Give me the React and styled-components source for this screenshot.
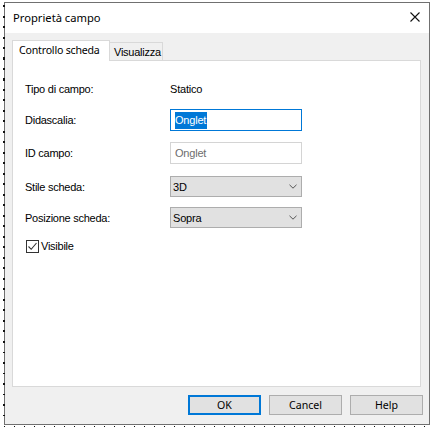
import React from "react";
import styled, { createGlobalStyle } from "styled-components";

const Global = createGlobalStyle`
  html, body { margin: 0; padding: 0; background: #ffffff; }
  body { width: 432px; height: 428px; overflow: hidden; }
`;

const uiFont = `"Segoe UI", "Noto Sans", "Liberation Sans", sans-serif`;
const oldFont = `"Tahoma", "Liberation Sans", sans-serif`;

const Page = styled.div`
  width: 432px;
  height: 428px;
  padding: 2px 0 0 4px;
  box-sizing: border-box;
  display: flex;
  flex-direction: column;
`;

const Window = styled.div`
  position: relative;
  width: 426px;
  height: 423px;
  box-sizing: border-box;
  border: 1px solid #707070;
  display: flex;
  flex-direction: column;
  background: #f0f0f0;
  &::before {
    content: "";
    position: absolute;
    left: -2px;
    top: 0;
    width: 2px;
    height: 100%;
    background: repeating-linear-gradient(
      to bottom,
      transparent 0px,
      transparent 2px,
      #111 2px,
      #111 4px,
      transparent 4px,
      transparent 10.5px
    );
  }
`;

const Ticks = styled.div`
  margin-top: 1px;
  width: 426px;
  height: 1px;
  background: repeating-linear-gradient(
    to right,
    #111 0px,
    #111 1px,
    transparent 1px,
    transparent 10px
  );
`;

const TitleBar = styled.div`
  height: 30px;
  background: #ffffff;
  display: flex;
  align-items: center;
  justify-content: space-between;
  padding: 0 9px 0 8px;
  flex-shrink: 0;
`;

const Title = styled.span`
  font-family: ${uiFont};
  font-size: 11.2px;
  color: #000;
  padding-bottom: 1px;
  white-space: nowrap;
`;

const CloseIcon = styled.svg`
  width: 10px;
  height: 10px;
  margin-bottom: 2px;
`;

const Body = styled.div`
  flex: 1;
  display: flex;
  flex-direction: column;
  padding: 7px 0 0 0;
`;

const TabStrip = styled.div`
  display: flex;
  align-items: flex-end;
  padding-left: 7px;
  height: 21px;
  margin-bottom: -1px;
  position: relative;
  z-index: 1;
`;

const Tab = styled.div`
  box-sizing: border-box;
  border: 1px solid #d9d9d9;
  border-bottom: none;
  background: ${(p) => (p.$active ? "#ffffff" : "#f0f0f0")};
  height: ${(p) => (p.$active ? "21px" : "18px")};
  margin-bottom: ${(p) => (p.$active ? "0" : "1px")};
  width: ${(p) => p.$w}px;
  padding-left: ${(p) => (p.$active ? "6px" : "4px")};
  display: flex;
  align-items: center;
  white-space: nowrap;
  font-family: ${(p) => (p.$active ? uiFont : oldFont)};
  font-size: ${(p) => (p.$active ? "10.6px" : "11px")};
  letter-spacing: ${(p) => (p.$active ? "-0.2px" : "-0.25px")};
  color: #000;
  ${(p) => (p.$active ? "padding-bottom: 2px;" : "padding-top: 1px;")}
  ${(p) => (p.$active ? "" : "margin-left: -1px;")}
`;

const Panel = styled.div`
  box-sizing: border-box;
  margin: 0 8px 0 7px;
  height: 327px;
  background: #ffffff;
  border: 1px solid #d9d9d9;
  padding: 17px 0 0 12px;
  display: flex;
  flex-direction: column;
`;

const Row = styled.div`
  display: flex;
  align-items: center;
  height: ${(p) => p.$h || 22}px;
  margin-top: ${(p) => p.$mt || 0}px;
`;

const Label = styled.span`
  width: 145px;
  font-family: ${oldFont};
  font-size: 11px;
  letter-spacing: -0.25px;
  color: #000;
  flex-shrink: 0;
  white-space: nowrap;
`;

const Value = styled.span`
  font-family: ${oldFont};
  font-size: 11px;
  letter-spacing: -0.2px;
  color: #000;
`;

const TextBox = styled.div`
  box-sizing: border-box;
  width: 132px;
  height: 22px;
  border: 1px solid ${(p) => (p.$focused ? "#0078d7" : "#d4d4d4")};
  background: #fff;
  display: flex;
  align-items: center;
  padding-left: 4px;
  font-family: ${oldFont};
  font-size: 11px;
  letter-spacing: -0.2px;
  color: ${(p) => (p.$disabled ? "#6d6d6d" : "#000")};
`;

const Selected = styled.span`
  background: #0078d7;
  color: #fff;
  padding: 2px 1px 3px 0;
  line-height: 12px;
`;

const Select = styled.div`
  box-sizing: border-box;
  width: 132px;
  height: 21px;
  border: 1px solid #adadad;
  background: #e1e1e1;
  display: flex;
  align-items: center;
  justify-content: space-between;
  padding: 0 4px 0 2px;
  font-family: ${oldFont};
  font-size: 11px;
  letter-spacing: -0.2px;
  color: #000;
`;

const Chevron = styled.svg`
  width: 8px;
  height: 5px;
`;

const CheckRow = styled.label`
  display: flex;
  align-items: center;
  gap: 2px;
  margin-top: 11px;
  margin-left: 1px;
  height: 14px;
  font-family: ${oldFont};
  font-size: 11px;
  letter-spacing: -0.25px;
  color: #000;
`;

const Box = styled.span`
  box-sizing: border-box;
  width: 13px;
  height: 13px;
  border: 1px solid #333;
  background: #fff;
  display: flex;
  align-items: center;
  justify-content: center;
`;

const Buttons = styled.div`
  display: flex;
  justify-content: flex-end;
  gap: 8px;
  padding-right: 6px;
  margin-top: 8px;
`;

const Button = styled.button`
  box-sizing: border-box;
  width: 73px;
  height: 20px;
  margin: 0;
  padding: 0 0 1px;
  background: #e1e1e1;
  border: ${(p) => (p.$default ? "2px solid #0078d7" : "1px solid #adadad")};
  font-family: ${uiFont};
  font-size: 10.6px;
  color: #000;
  outline: none;
`;

export default function App() {
  return (
    <>
      <Global />
      <Page>
        <Window>
          <TitleBar>
            <Title>Proprietà campo</Title>
            <CloseIcon viewBox="0 0 10 10">
              <path d="M0.5 0.5 L9.5 9.5 M9.5 0.5 L0.5 9.5" stroke="#111" strokeWidth="1.1" fill="none" />
            </CloseIcon>
          </TitleBar>
          <Body>
            <TabStrip>
              <Tab $active $w={98}>Controllo scheda</Tab>
              <Tab $w={54}>Visualizza</Tab>
            </TabStrip>
            <Panel>
              <Row>
                <Label>Tipo di campo:</Label>
                <Value>Statico</Value>
              </Row>
              <Row $mt={9}>
                <Label>Didascalia:</Label>
                <TextBox $focused>
                  <Selected>Onglet</Selected>
                </TextBox>
              </Row>
              <Row $mt={11}>
                <Label>ID campo:</Label>
                <TextBox $disabled>Onglet</TextBox>
              </Row>
              <Row $mt={12} $h={21}>
                <Label>Stile scheda:</Label>
                <Select>
                  <span>3D</span>
                  <Chevron viewBox="0 0 8 5">
                    <path d="M0.5 0.8 L4 4.2 L7.5 0.8" stroke="#555" strokeWidth="1" fill="none" />
                  </Chevron>
                </Select>
              </Row>
              <Row $mt={10} $h={21}>
                <Label>Posizione scheda:</Label>
                <Select>
                  <span>Sopra</span>
                  <Chevron viewBox="0 0 8 5">
                    <path d="M0.5 0.8 L4 4.2 L7.5 0.8" stroke="#555" strokeWidth="1" fill="none" />
                  </Chevron>
                </Select>
              </Row>
              <CheckRow>
                <Box>
                  <svg width="11" height="11" viewBox="0 0 11 11">
                    <path d="M1.5 5.5 L4.2 8.3 L9.5 2" stroke="#333" strokeWidth="1.1" fill="none" />
                  </svg>
                </Box>
                <span>Visibile</span>
              </CheckRow>
            </Panel>
            <Buttons>
              <Button $default>OK</Button>
              <Button>Cancel</Button>
              <Button>Help</Button>
            </Buttons>
          </Body>
        </Window>
        <Ticks />
      </Page>
    </>
  );
}
